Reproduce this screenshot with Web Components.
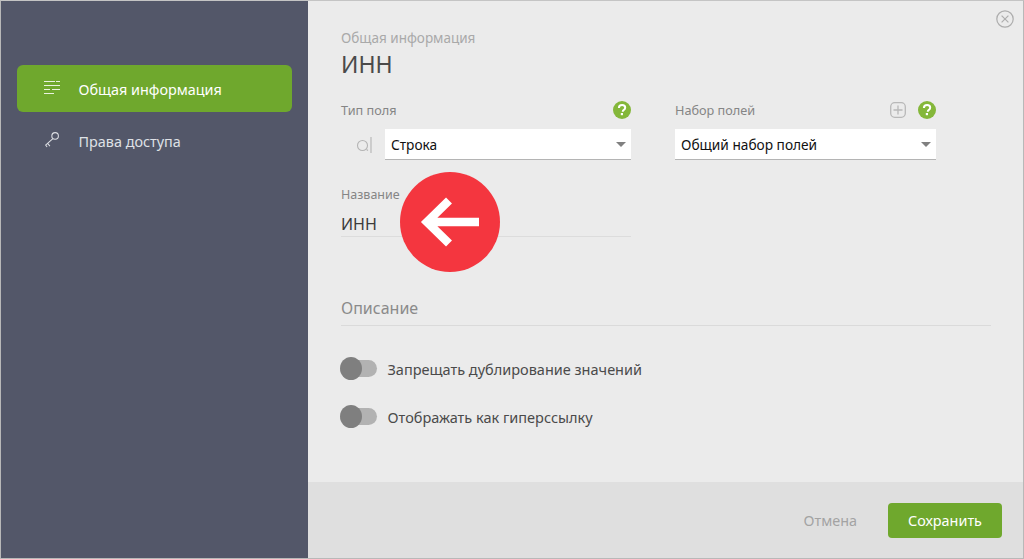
<!DOCTYPE html>
<html lang="ru">
<head>
<meta charset="utf-8">
<title>ИНН</title>
<style>
  html, body { margin: 0; height: 100%; overflow: hidden; background: #ebebeb; }
  body { font-family: "Noto Sans", "Open Sans", sans-serif; }
</style>
</head>
<body>
<field-dialog>
  <side-menu slot="side">
    <menu-item active>
      <svg slot="icon" width="16" height="14" viewBox="0 0 16 14" fill="none" stroke="#fff" stroke-width="1" opacity=".85"><path d="M0 .5h11M12 .5h4M0 4.5h16M0 8.5h6M8 8.5h8M0 12.5h10"/></svg>
      Общая информация
    </menu-item>
    <menu-item>
      <svg slot="icon" width="16" height="17" viewBox="0 0 18 18" fill="none" stroke="#dcdee3" stroke-width="1.2"><circle cx="12.5" cy="5" r="3.7"/><path d="M10 8L1.5 15.5M4 13.2l2.6 3.3M1.8 15.2l1.7 2.3"/></svg>
      Права доступа
    </menu-item>
  </side-menu>

  <page-head>
    <span slot="over">Общая информация</span>
    ИНН
  </page-head>

  <div style="display:grid;grid-template-columns:290px 261px;column-gap:44px;">
    <select-field label="Тип поля" value="Строка">
      <svg slot="lead" width="16" height="18" viewBox="0 0 16 18" fill="none" stroke="#b4b4b4" stroke-width="1.1"><circle cx="6.5" cy="9.5" r="5"/><path d="M10.5 13.5l1.5 1M15 1v16"/></svg>
    </select-field>
    <select-field label="Набор полей" value="Общий набор полей">
      <svg slot="tools" width="16" height="16" viewBox="0 0 16 16" fill="none" stroke="#b8b8b8" stroke-width="1.3"><rect x=".7" y=".7" width="14.6" height="14.6" rx="4"/><path d="M8 3.5v9M3.5 8h9"/></svg>
    </select-field>
  </div>

  <text-field label="Название" value="ИНН"></text-field>
  <desc-field>Описание</desc-field>

  <toggle-row>Запрещать дублирование значений</toggle-row>
  <toggle-row>Отображать как гиперссылку</toggle-row>

  <dialog-footer slot="footer"></dialog-footer>
</field-dialog>

<script>
const helpIcon = `<svg width="18" height="18" viewBox="0 0 18 18"><circle cx="9" cy="9" r="9" fill="#84b73a"/><path d="M5.9 7c0-1.9 1.4-2.9 3.2-2.9s3.1 1 3.1 2.6c0 1.3-.8 1.9-1.6 2.4-.6.4-.8.7-.8 1.3v.3" fill="none" stroke="#fff" stroke-width="2"/><rect x="7.8" y="12" width="2.2" height="2.2" fill="#fff"/></svg>`;

class FieldDialog extends HTMLElement {
  constructor() {
    super();
    this.attachShadow({mode: 'open'}).innerHTML = `<style>
      :host { display: flex; box-sizing: border-box; width: 1024px; height: 559px; border: 1px solid #b8b8b8; border-top-color: #c4c4c4; background: #ebebeb; }
      .side { width: 307px; flex: none; background: #535769; }
      .main { flex: 1; display: flex; flex-direction: column; min-width: 0; position: relative; }
      .body { flex: 1; padding: 28px 32px 0 33px; }
      .close { position: absolute; top: 9px; right: 9px; display: block; }
      .badge { position: absolute; left: 92px; top: 171px; width: 100px; height: 100px; border-radius: 50%; background: #f4363f; display: flex; align-items: center; justify-content: center; }
    </style>
    <div class="side"><slot name="side"></slot></div>
    <div class="main">
      <svg class="close" width="18" height="18" viewBox="0 0 18 18" fill="none" stroke="#adadad" stroke-width="1.2"><circle cx="9" cy="9" r="8.2"/><path d="M5.6 5.6l6.8 6.8M12.4 5.6l-6.8 6.8"/></svg>
      <div class="body"><slot></slot></div>
      <slot name="footer"></slot>
      <div class="badge"><svg width="60" height="50" viewBox="0 0 60 50" fill="none" stroke="#fff" stroke-width="8.5"><path d="M29 3.5L7 25l22 21.5M7 25h52"/></svg></div>
    </div>`;
  }
}

class SideMenu extends HTMLElement {
  constructor() {
    super();
    this.attachShadow({mode: 'open'}).innerHTML = `<style>
      :host { display: flex; flex-direction: column; gap: 6px; padding: 64px 16px 0 16px; }
    </style><slot></slot>`;
  }
}

class MenuItem extends HTMLElement {
  constructor() {
    super();
    this.attachShadow({mode: 'open'}).innerHTML = `<style>
      :host { display: flex; align-items: center; height: 47px; border-radius: 6px; color: #dfe1e6; font-size: 14.4px; }
      :host([active]) { background: #6fa82d; color: #fff; padding-top: 2px; box-sizing: border-box; }
      .icon { width: 61.5px; flex: none; display: flex; padding-left: 27px; box-sizing: border-box; margin-top: -4px; }
    </style><span class="icon"><slot name="icon"></slot></span><slot></slot>`;
  }
}

class PageHead extends HTMLElement {
  constructor() {
    super();
    this.attachShadow({mode: 'open'}).innerHTML = `<style>
      :host { display: block; margin-bottom: 19px; }
      .over { font-size: 13.5px; line-height: 18px; color: #a9a9a9; }
      .title { font-size: 23px; line-height: 34px; color: #4a4a4a; }
    </style><div class="over"><slot name="over"></slot></div><div class="title"><slot></slot></div>`;
  }
}

class SelectField extends HTMLElement {
  constructor() {
    super();
    this.attachShadow({mode: 'open'}).innerHTML = `<style>
      :host { display: block; }
      .top { display: flex; align-items: center; height: 20px; margin-bottom: 9px; font-size: 12.7px; color: #858585; }
      .top span { flex: 1; }
      .tools { display: flex; align-items: center; gap: 12px; }
      .row { display: flex; align-items: center; }
      ::slotted([slot=lead]) { margin: 0 13px 0 15px; flex: none; }
      .box { flex: 1; display: flex; align-items: center; box-sizing: border-box; height: 31px; padding: 0 6px; background: #fff; border-bottom: 1px solid #b4b4b4; color: #111; font-size: 13.7px; }
      .box span { flex: 1; }
      .caret { width: 0; height: 0; border: 5px solid transparent; border-top: 5px solid #808080; border-bottom: 0; margin-right: -1px; }
    </style>
    <div class="top"><span>${this.getAttribute('label')}</span>
      <div class="tools"><slot name="tools"></slot>${helpIcon}</div></div>
    <div class="row"><slot name="lead"></slot>
      <div class="box"><span>${this.getAttribute('value')}</span><i class="caret"></i></div></div>`;
  }
}

class TextField extends HTMLElement {
  constructor() {
    super();
    this.attachShadow({mode: 'open'}).innerHTML = `<style>
      :host { display: block; width: 290px; margin-top: 25px; }
      .label { font-size: 12.5px; line-height: 20px; color: #858585; }
      .value { font-size: 16px; line-height: 24px; padding: 7px 0 0; color: #3c3c3c; border-bottom: 1px solid #dcdcdc; }
    </style><div class="label">${this.getAttribute('label')}</div><div class="value">${this.getAttribute('value')}</div>`;
  }
}

class DescField extends HTMLElement {
  constructor() {
    super();
    this.attachShadow({mode: 'open'}).innerHTML = `<style>
      :host { display: block; margin: 58px 0 31px; padding-bottom: 4px; font-size: 16px; line-height: 26px; color: #8a8a8a; border-bottom: 1px solid #dadada; }
    </style><slot></slot>`;
  }
}

class ToggleRow extends HTMLElement {
  constructor() {
    super();
    this.attachShadow({mode: 'open'}).innerHTML = `<style>
      :host { display: flex; align-items: center; gap: 10.5px; height: 24px; margin-bottom: 24px; margin-left: -1px; font-size: 14.5px; color: #4a4a4a; }
      .sw { width: 37px; height: 24px; position: relative; flex: none; }
      .sw::before { content: ""; position: absolute; left: 4px; right: 0; top: 3px; height: 17px; border-radius: 9px; background: #b2b2b2; }
      .sw::after { content: ""; position: absolute; left: 0; top: 0; width: 22px; height: 23px; border-radius: 50%; background: #7f7f7f; }
    </style><span class="sw"></span><slot></slot>`;
  }
}

class DialogFooter extends HTMLElement {
  constructor() {
    super();
    this.attachShadow({mode: 'open'}).innerHTML = `<style>
      :host { display: flex; align-items: center; justify-content: flex-end; gap: 31px; box-sizing: border-box; height: 76px; padding: 0 21px 0 0; background: #dfdfdf; font-size: 14.4px; }
      .cancel { color: #a3a3a3; }
      .save { width: 114px; height: 35px; border-radius: 4px; background: #6fa82d; color: #fff; display: flex; align-items: center; justify-content: center; }
    </style><span class="cancel">Отмена</span><span class="save">Сохранить</span>`;
  }
}

customElements.define('field-dialog', FieldDialog);
customElements.define('side-menu', SideMenu);
customElements.define('menu-item', MenuItem);
customElements.define('page-head', PageHead);
customElements.define('select-field', SelectField);
customElements.define('text-field', TextField);
customElements.define('desc-field', DescField);
customElements.define('toggle-row', ToggleRow);
customElements.define('dialog-footer', DialogFooter);
</script>
</body>
</html>
